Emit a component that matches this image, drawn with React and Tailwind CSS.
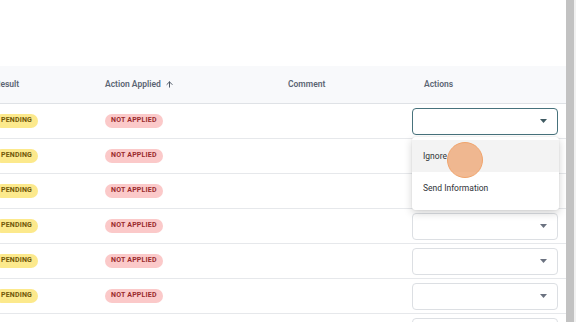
import { ArrowUp } from 'lucide-react';

/* ─── Badges ─── */
const Badge = ({ tone, children }) => {
  const map = {
    pending: 'bg-[#fce98c] text-[#6f5708]',
    notApplied: 'bg-[#fbc9c9] text-[#9a2a2c]',
  };
  return (
    <span className={`inline-flex items-center h-[14px] px-[6px] rounded-full text-[7px] font-bold tracking-[0.2px] leading-none ${map[tone]}`}>
      {children}
    </span>
  );
};

/* ─── Select box ─── */
const SelectBox = ({ focused }) => (
  <div
    className={`w-[146px] h-[27px] rounded-[4px] border bg-white flex items-center justify-end pr-[10px] ${
      focused ? 'border-[#47727c]' : 'border-[#dcdfe3]'
    }`}
  >
    <svg width="7" height="4" viewBox="0 0 7 4">
      <path d="M0 0 L7 0 L3.5 4 Z" fill={focused ? '#3f5a62' : '#6b7280'} />
    </svg>
  </div>
);

const rows = [0, 1, 2, 3, 4, 5, 6];

export default function App() {
  return (
    <div className="w-[576px] h-[322px] overflow-hidden bg-white flex" style={{ fontFamily: 'Roboto, "Liberation Sans", sans-serif' }}>
      <div className="relative w-[566px] h-full overflow-hidden">
        <div className="h-[66px]" />

        {/* Header */}
        <div className="ml-[-5px] h-[38px] bg-[#f8f9fb] border-b border-[#dfe2e6] grid grid-cols-[110px_183px_124px_154px] items-center text-[8.5px] font-semibold text-[#5b6573]">
          <div>Result</div>
          <div className="flex items-center gap-[4px]">
            Action Applied <ArrowUp className="w-[9px] h-[9px] text-[#4b5563]" strokeWidth={2.6} />
          </div>
          <div>Comment</div>
          <div className="pl-[12px]">Actions</div>
        </div>

        {/* Rows */}
        {rows.map(i => (
          <div key={i} className="ml-[-5px] h-[35px] border-b border-[#e6e8eb] grid grid-cols-[110px_183px_124px_154px] items-center">
            <div className="flex items-center h-full pb-[1px]"><Badge tone="pending">PENDING</Badge></div>
            <div className="flex items-center h-full pb-[1px]"><Badge tone="notApplied">NOT APPLIED</Badge></div>
            <div />
            <div className="flex items-center h-full"><SelectBox focused={i === 0} /></div>
          </div>
        ))}

        {/* Dropdown menu */}
        <div className="absolute left-[412px] top-[137px] w-[147px] bg-white rounded-[3px] shadow-[0_3px_8px_rgba(0,0,0,0.18),0_0_1px_rgba(0,0,0,0.2)] pt-[3px] pb-[6px] text-[8.5px] text-[#2f3337]">
          <div className="h-[32px] bg-[#f3f3f3] flex items-center pl-[11px]">Ignore</div>
          <div className="h-[32px] flex items-center pl-[11px]">Send Information</div>
        </div>

        {/* Click indicator */}
        <div className="absolute left-[447px] top-[142px] w-[36px] h-[36px] rounded-full bg-[#eea36f]/75 border border-[#f0a46c]" />
      </div>

      {/* Scrollbar */}
      <div className="w-[8px] h-full bg-[#c2c2c2]" />
      <div className="w-[2px] h-full bg-[#f1f1f1]" />
    </div>
  );
}
